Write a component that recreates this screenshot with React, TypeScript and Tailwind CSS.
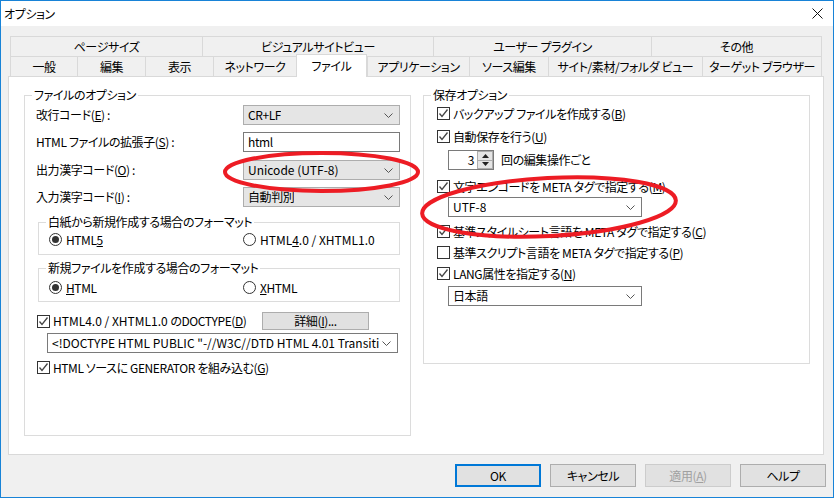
import React from "react";

function Chevron() {
  return (
    <svg width="9" height="5" viewBox="0 0 9 5" className="shrink-0">
      <polyline points="0.5,0.5 4.5,4.5 8.5,0.5" fill="none" stroke="#555" strokeWidth="1" />
    </svg>
  );
}

function Combo({ value, w, light = false }: { value: React.ReactNode; w: string; light?: boolean }) {
  return (
    <div
      className={`${w} h-[20px] flex items-center justify-between pl-[4px] pr-[6px] border ${
        light ? "bg-white border-[#7a7a7a]" : "bg-[#e5e5e5] border-[#adadad]"
      }`}
    >
      <span className="whitespace-nowrap overflow-hidden">{value}</span>
      <Chevron />
    </div>
  );
}

function Check({ on = true, children }: { on?: boolean; children: React.ReactNode }) {
  return (
    <div className="h-[13px] flex items-center gap-[3px] whitespace-nowrap">
      <div className="w-[13px] h-[13px] border border-[#333] bg-white flex items-center justify-center shrink-0">
        {on && (
          <svg width="11" height="11" viewBox="0 0 11 11">
            <polyline points="1.5,5.5 4,8.5 9.5,1.5" fill="none" stroke="#444" strokeWidth="1.3" />
          </svg>
        )}
      </div>
      <span>{children}</span>
    </div>
  );
}

function Radio({ on = false, children }: { on?: boolean; children: React.ReactNode }) {
  return (
    <div className="h-[13px] flex items-center gap-[4px] whitespace-nowrap">
      <div className="w-[13px] h-[13px] rounded-full border border-[#333] bg-white flex items-center justify-center shrink-0">
        {on && <div className="w-[7px] h-[7px] rounded-full bg-[#333]" />}
      </div>
      <span>{children}</span>
    </div>
  );
}

function Group({ title, className, children }: { title: string; className: string; children: React.ReactNode }) {
  return (
    <div className={`relative border border-[#dcdcdc] ${className}`}>
      <span className="absolute -top-[9px] left-[7px] px-[2px] bg-white leading-[16px] whitespace-nowrap">{title}</span>
      {children}
    </div>
  );
}

function Button({ children, primary = false, disabled = false }: { children: React.ReactNode; primary?: boolean; disabled?: boolean }) {
  return (
    <div
      className={`w-[86px] h-[23px] flex items-center justify-center bg-[#e1e1e1] ${
        primary ? "border-2 border-[#0078d7]" : disabled ? "border border-[#cccccc] bg-[#cccccc] text-[#a0a0a0]" : "border border-[#adadad]"
      }`}
    >
      {children}
    </div>
  );
}

const row1 = [
  { t: "ページサイズ", w: "w-[192px]" },
  { t: "ビジュアルサイトビュー", w: "w-[231px]" },
  { t: "ユーザー プラグイン", w: "w-[218px]" },
  { t: "その他", w: "w-[171px]" },
];

const row2 = [
  { t: "一般", w: "w-[67px]" },
  { t: "編集", w: "w-[68px]" },
  { t: "表示", w: "w-[68px]" },
  { t: "ネットワーク", w: "w-[83px]" },
  { t: "ファイル", w: "w-[71px]", sel: true },
  { t: "アプリケーション", w: "w-[102px]" },
  { t: "ソース編集", w: "w-[79px]" },
  { t: "サイト/素材/フォルダ ビュー", w: "w-[154px]" },
  { t: "ターゲット ブラウザー", w: "w-[120px]" },
];

export default function App() {
  return (
    <div className="relative w-[834px] h-[498px] flex flex-col border border-[#1883d7] bg-[#f0f0f0] text-[12px] tracking-[-0.4px] text-black [font-family:'Noto_Sans_CJK_JP',sans-serif] [font-feature-settings:'palt'] overflow-hidden">
      {/* title bar */}
      <div className="h-[25px] bg-white flex items-center justify-between pl-[3px] pr-[10px] shrink-0">
        <span className="leading-none">オプション</span>
        <svg width="11" height="11" viewBox="0 0 11 11">
          <path d="M0.5 0.5 L10.5 10.5 M10.5 0.5 L0.5 10.5" stroke="#111" strokeWidth="1" />
        </svg>
      </div>

      <div className="flex-1 flex flex-col pt-[10px] pl-[7px]">
        {/* tabs */}
        <div className="ml-[2px] w-[812px] flex flex-col">
          <div className="flex h-[20px]">
            {row1.map((t, i) => (
              <div
                key={t.t}
                className={`${t.w} h-[20px] flex items-center justify-center border-t border-l border-[#d9d9d9] ${i === row1.length - 1 ? "border-r" : ""}`}
              >
                {t.t}
              </div>
            ))}
          </div>
          <div className="flex h-[20px]">
            {row2.map((t, i) =>
              t.sel ? (
                <div
                  key={t.t}
                  className={`${t.w} relative z-10 -mt-[2px] h-[23px] pb-[1px] flex items-center justify-center bg-white border-t border-l border-r border-[#d9d9d9]`}
                >
                  {t.t}
                </div>
              ) : (
                <div
                  key={t.t}
                  className={`${t.w} h-[20px] flex items-center justify-center border-t border-l border-[#d9d9d9] ${i === row2.length - 1 ? "border-r" : ""}`}
                >
                  {t.t}
                </div>
              )
            )}
          </div>
        </div>

        {/* panel */}
        <div className="w-[816px] h-[379px] bg-white border border-[#d9d9d9] flex gap-[12px] pl-[15px] pt-[18px]">
          {/* left group */}
          <Group title="ファイルのオプション" className="w-[387px] h-[341px] flex flex-col">
            <div className="mt-[9px] pl-[11px] flex items-center">
              <span className="w-[207px]">改行コード(<u>E</u>) :</span>
              <Combo w="w-[157px]" value="CR+LF" />
            </div>
            <div className="mt-[7px] pl-[11px] flex items-center">
              <span className="w-[207px]">HTML ファイルの拡張子(<u>S</u>) :</span>
              <div className="w-[157px] h-[20px] border border-[#7a7a7a] bg-white flex items-center pl-[4px]">html</div>
            </div>
            <div className="mt-[8px] pl-[11px] flex items-center">
              <span className="w-[207px]">出力漢字コード(<u>O</u>) :</span>
              <Combo w="w-[157px]" value={<span className="tracking-normal">Unicode (UTF-8)</span>} />
            </div>
            <div className="mt-[7px] pl-[11px] flex items-center">
              <span className="w-[207px]">入力漢字コード(<u>I</u>) :</span>
              <Combo w="w-[157px]" value="自動判別" />
            </div>

            <Group title="白紙から新規作成する場合のフォーマット" className="mt-[15px] ml-[13px] w-[362px] h-[33px] flex">
              <div className="mt-[10px] pl-[10px] flex">
                <div className="w-[194px]">
                  <Radio on>
                    HTML<u>5</u>
                  </Radio>
                </div>
                <Radio>
                  <span className="tracking-normal">
                    HTML<u>4</u>.0 / XHTML1.0
                  </span>
                </Radio>
              </div>
            </Group>

            <Group title="新規ファイルを作成する場合のフォーマット" className="mt-[13px] ml-[13px] w-[362px] h-[34px] flex">
              <div className="mt-[12px] pl-[10px] flex">
                <div className="w-[194px]">
                  <Radio on>
                    <u>H</u>TML
                  </Radio>
                </div>
                <Radio>
                  <u>X</u>HTML
                </Radio>
              </div>
            </Group>

            <div className="mt-[10px] pl-[12px] flex items-center h-[18px]">
              <div className="w-[225px]">
                <Check>
                  <span className="tracking-normal">HTML4.0 / XHTML1.0 </span>のDOCTYPE(<u>D</u>)
                </Check>
              </div>
              <div className="w-[107px] h-[18px] bg-[#e1e1e1] border border-[#adadad] flex items-center justify-center">
                詳細(<u>I</u>)...
              </div>
            </div>
            <div className="mt-[3px] pl-[22px]">
              <Combo
                w="w-[351px]"
                light
                value={<span className="tracking-normal">{'<!DOCTYPE HTML PUBLIC "-//W3C//DTD HTML 4.01 Transiti'}</span>}
              />
            </div>
            <div className="mt-[8px] pl-[12px]">
              <Check>
                HTML ソースに GENERATOR を組み込む(<u>G</u>)
              </Check>
            </div>
          </Group>

          {/* right group */}
          <Group title="保存オプション" className="w-[387px] h-[269px] flex flex-col">
            <div className="mt-[11px] pl-[13px]">
              <Check>
                バックアップ ファイルを作成する(<u>B</u>)
              </Check>
            </div>
            <div className="mt-[10px] pl-[13px]">
              <Check>
                自動保存を行う(<u>U</u>)
              </Check>
            </div>
            <div className="mt-[7px] pl-[24px] flex items-center gap-[7px]">
              <div className="w-[46px] h-[20px] border border-[#7a7a7a] bg-white flex">
                <div className="flex-1 flex items-center justify-end pr-[3px]">3</div>
                <div className="w-[16px] flex flex-col">
                  <div className="flex-1 bg-[#e5e5e5] border border-[#adadad] flex items-center justify-center">
                    <svg width="7" height="4" viewBox="0 0 7 4">
                      <polygon points="0,4 3.5,0 7,4" fill="#222" />
                    </svg>
                  </div>
                  <div className="flex-1 bg-[#e5e5e5] border border-t-0 border-[#adadad] flex items-center justify-center">
                    <svg width="7" height="4" viewBox="0 0 7 4">
                      <polygon points="0,0 3.5,4 7,0" fill="#222" />
                    </svg>
                  </div>
                </div>
              </div>
              <span>回の編集操作ごと</span>
            </div>
            <div className="mt-[10px] pl-[13px]">
              <Check>
                文字エンコードを META タグで指定する(<u>M</u>)
              </Check>
            </div>
            <div className="mt-[4px] pl-[24px]">
              <Combo w="w-[194px]" light value={<span className="tracking-normal">UTF-8</span>} />
            </div>
            <div className="mt-[8px] pl-[13px]">
              <Check>
                基準スタイルシート言語を META タグで指定する(<u>C</u>)
              </Check>
            </div>
            <div className="mt-[8px] pl-[13px]">
              <Check on={false}>
                基準スクリプト言語を META タグで指定する(<u>P</u>)
              </Check>
            </div>
            <div className="mt-[8px] pl-[13px]">
              <Check>
                LANG属性を指定する(<u>N</u>)
              </Check>
            </div>
            <div className="mt-[6px] pl-[24px]">
              <Combo w="w-[194px]" light value="日本語" />
            </div>
          </Group>
        </div>

        {/* buttons */}
        <div className="mt-[9px] pr-[7px] flex justify-end gap-[9px]">
          <Button primary>OK</Button>
          <Button>キャンセル</Button>
          <Button disabled>
            適用(<u>A</u>)
          </Button>
          <Button>ヘルプ</Button>
        </div>
      </div>

      {/* red annotation ellipses */}
      <svg className="absolute left-0 top-0 pointer-events-none" width="834" height="498" viewBox="0 0 834 498">
        <ellipse cx="320.5" cy="171" rx="96.5" ry="19" fill="none" stroke="#ed1c24" strokeWidth="4" />
        <ellipse cx="548" cy="206" rx="127" ry="29" fill="none" stroke="#ed1c24" strokeWidth="4" transform="rotate(-3 548 206)" />
      </svg>
    </div>
  );
}
